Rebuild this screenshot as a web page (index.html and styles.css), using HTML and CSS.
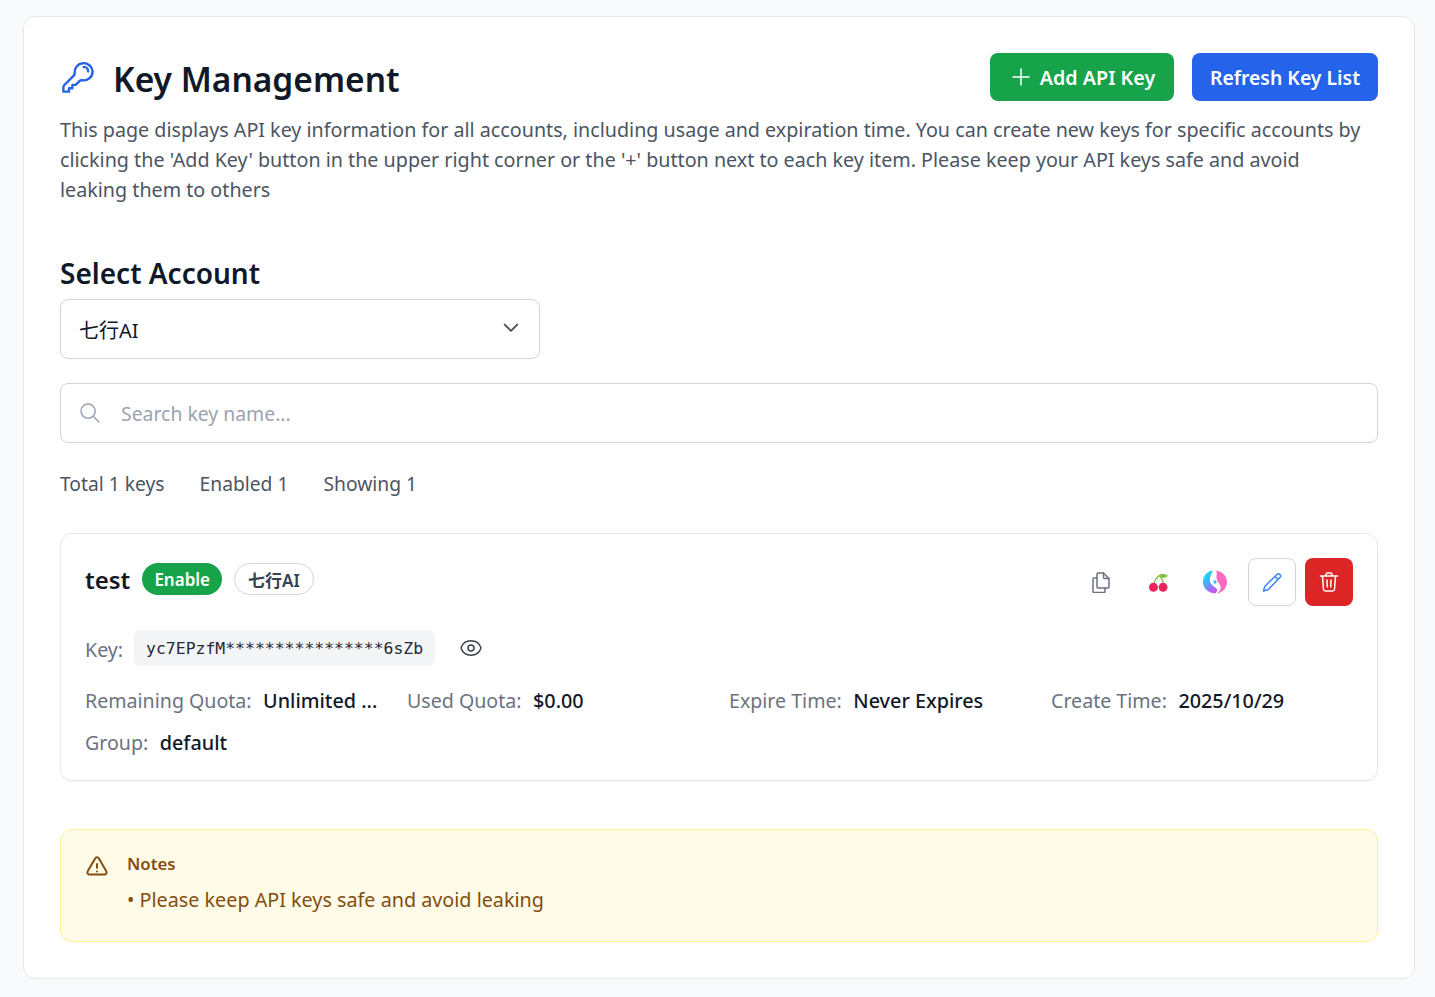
FILE: index.html
```html
<!DOCTYPE html>
<html>
  <head>
    <meta name="viewport" content="width=device-width,initial-scale=1.0">
    <title>Key Management</title>
    <link rel="stylesheet" href="styles.css">
  </head>
  <body>
    <div class="panel">
      <!-- Header -->
      <div class="header">
        <div class="title">
          <svg class="title-icon" viewBox="0 0 24 24" fill="none" stroke="#2563eb" stroke-width="1.6" stroke-linecap="round" stroke-linejoin="round">
            <path d="M15.75 5.25a3 3 0 0 1 3 3m3 0a6 6 0 0 1-7.03 5.91c-.56-.1-1.16.03-1.57.43l-2.65 2.66H8.25v2.25H6v2.25H2.25v-2.82c0-.6.24-1.17.66-1.59l6.41-6.41c.4-.4.53-1 .43-1.57A6 6 0 1 1 21.75 8.25Z"/>
          </svg>
          <h1>Key Management</h1>
        </div>
        <div class="header-btns">
          <button class="btn btn-green">
            <svg class="plus" viewBox="0 0 24 24" fill="none" stroke="currentColor" stroke-width="1.5" stroke-linecap="round"><path d="M12 4v16m8-8H4"/></svg>
            Add API Key
          </button>
          <button class="btn btn-blue">Refresh Key List</button>
        </div>
      </div>
      <p class="desc">This page displays API key information for all accounts, including usage and expiration time. You can create new keys for specific accounts by clicking the 'Add Key' button in the upper right corner or the '+' button next to each key item. Please keep your API keys safe and avoid leaking them to others</p>

      <!-- Account select -->
      <h2 class="section-title">Select Account</h2>
      <div class="select">
        <span>七行AI</span>
        <svg class="chevron" viewBox="0 0 24 24" fill="none" stroke="#4b5563" stroke-width="2.4" stroke-linecap="round" stroke-linejoin="round"><path d="m4.500 8 7.500 7.500L19.500 8"/></svg>
      </div>

      <!-- Search -->
      <div class="search">
        <svg class="search-icon" viewBox="0 0 24 24" fill="none" stroke="#9ca3af" stroke-width="1.5" stroke-linecap="round"><path d="m21 21-5.200-5.200M17.200 10.100a7.100 7.100 0 1 1-14.200 0 7.100 7.100 0 0 1 14.200 0Z"/></svg>
        <span class="placeholder">Search key name...</span>
      </div>

      <div class="stats">
        <span>Total 1 keys</span>
        <span>Enabled 1</span>
        <span>Showing 1</span>
      </div>

      <!-- Key item -->
      <div class="key-card">
        <div class="key-top">
          <div class="key-name">
            <span class="name">test</span>
            <span class="badge badge-green">Enable</span>
            <span class="badge badge-outline">七行AI</span>
          </div>
          <div class="actions">
            <span class="action">
              <svg class="copy-icon" viewBox="0 0 18 21" fill="none" stroke="#6b7280" stroke-width="1.5" stroke-linejoin="round" stroke-linecap="round">
                <path d="M6 1h5.500L17 6.500V15a1 1 0 0 1-1 1H6a1 1 0 0 1-1-1V2a1 1 0 0 1 1-1Z"/>
                <path d="M11.500 1v4.500a1 1 0 0 0 1 1H17"/>
                <path d="M5 6H2a1 1 0 0 0-1 1v12.500a1 1 0 0 0 1 1h10a1 1 0 0 0 1-1V16"/>
              </svg>
            </span>
            <span class="action">
              <svg class="cherry-icon" viewBox="0 0 24 24">
                <path d="M6 15C7 10 9 6 13 3M18 15c0-4-1.500-8-5-12" fill="none" stroke="#7cb342" stroke-width="1.500"/>
                <path d="M12.500 3C15 0 20 0 24 3.500 21 7 15 7.500 12.500 3Z" fill="#8bc34a"/>
                <path d="M12.500 3C10.500 4 8.500 6 7.500 8.500 10 8 12.500 6 12.500 3Z" fill="#8bc34a"/>
                <circle cx="5.600" cy="18" r="5.600" fill="#e6275c"/>
                <circle cx="17.800" cy="18" r="5.600" fill="#e6275c"/>
              </svg>
            </span>
            <span class="action">
              <svg class="orb-icon" viewBox="0 0 24 24">
                <defs>
                  <linearGradient id="orbLeft" x1="0" y1="0" x2="0.5" y2="1">
                    <stop offset="0" stop-color="#1fe5e8"/>
                    <stop offset="0.5" stop-color="#38b6f5"/>
                    <stop offset="1" stop-color="#c05af0"/>
                  </linearGradient>
                </defs>
                <path d="M10 .5C4 1 0 6 0 12c0 6 5 11 12 11.500 2-1.500 3-3.500 1-5.500C9 15 6 13 7 8c.5-3 2-5 3-7.500Z" fill="url(#orbLeft)"/>
                <path d="M13 .5C19 1 24 6 24 12c0 6-5 11-10 11.500 3-2.500 4.500-4.500 3.500-7.500C16 13 13 10 13.500 6c.3-2 .5-3.500-.5-5.500Z" fill="#fb69c0"/>
                <path d="M12 9c.3 1.800 1.200 2.700 3 3-1.800.3-2.700 1.200-3 3-.3-1.800-1.200-2.700-3-3 1.800-.3 2.700-1.200 3-3Z" fill="#38bdf8"/>
              </svg>
            </span>
            <button class="icon-btn icon-btn-edit">
              <svg viewBox="0 0 24 24" fill="none" stroke="#3b82f6" stroke-width="1.500" stroke-linecap="round" stroke-linejoin="round"><path d="M16.900 4.500a2.100 2.100 0 0 1 3 3L8 19.800 3.500 21l1.200-4.500L16.900 4.500ZM15 6.500l3 3"/></svg>
            </button>
            <button class="icon-btn icon-btn-delete">
              <svg viewBox="0 0 24 24" fill="none" stroke="#fff" stroke-width="1.500" stroke-linecap="round" stroke-linejoin="round"><path d="M3.500 6h17M9 6V4.500A1.500 1.500 0 0 1 10.500 3h3A1.500 1.500 0 0 1 15 4.500V6M5.500 6l1 13.500A1.800 1.800 0 0 0 8.300 21h7.400a1.800 1.800 0 0 0 1.800-1.500L18.500 6M10 10l.3 7M14 10l-.3 7"/></svg>
            </button>
          </div>
        </div>

        <div class="key-row">
          <span class="label">Key:</span>
          <code class="key-value">yc7EPzfM****************6sZb</code>
          <svg class="eye-icon" viewBox="0 0 24 24" fill="none" stroke="#374151" stroke-width="1.500" stroke-linecap="round" stroke-linejoin="round">
            <path d="M2.100 12.300a1 1 0 0 1 0-.6C3.500 7.600 7.400 4.800 12 4.800s8.500 2.800 9.900 6.900a1 1 0 0 1 0 .6c-1.400 4.100-5.300 6.900-9.900 6.900s-8.500-2.800-9.900-6.900Z"/>
            <circle cx="12" cy="12" r="3"/>
          </svg>
        </div>

        <div class="meta">
          <div class="meta-item"><span class="label">Remaining Quota:</span><span class="value">Unlimited ...</span></div>
          <div class="meta-item"><span class="label">Used Quota:</span><span class="value">$0.00</span></div>
          <div class="meta-item"><span class="label">Expire Time:</span><span class="value">Never Expires</span></div>
          <div class="meta-item"><span class="label">Create Time:</span><span class="value">2025/10/29</span></div>
          <div class="meta-item"><span class="label">Group:</span><span class="value">default</span></div>
        </div>
      </div>

      <!-- Notes -->
      <div class="notes">
        <svg class="warn-icon" viewBox="0 0 24 24" fill="none" stroke="#854d0e" stroke-width="2" stroke-linecap="round" stroke-linejoin="round">
          <path d="M12 9v3.800m-9.300 3.400c-.9 1.500.2 3.400 1.900 3.400h14.800c1.700 0 2.800-1.900 1.900-3.400L13.900 3.400c-.9-1.500-3-1.500-3.800 0L2.700 16.200ZM12 16.500h0"/>
        </svg>
        <div class="notes-text">
          <div class="notes-title">Notes</div>
          <div class="notes-line">• Please keep API keys safe and avoid leaking</div>
        </div>
      </div>
    </div>
  </body>
</html>
```

FILE: styles.css
```css
* { box-sizing: border-box; }

body {
  margin: 0;
  padding: 16px 20px 18px 23px;
  background: #f9fafb;
  color: #111827;
  font-family: "Noto Sans", "Noto Sans CJK SC", sans-serif;
}

.panel {
  background: #fff;
  border: 1px solid #e5e7eb;
  border-radius: 12px;
  padding: 36px;
  height: 963px;
}

/* Header */
.header {
  display: flex;
  justify-content: space-between;
  align-items: flex-start;
}
.title {
  display: flex;
  align-items: center;
  gap: 17px;
  height: 52px;
}
.title-icon { width: 36px; height: 36px; margin-top: -4px; }
h1 {
  margin: 0;
  font-size: 33.5px;
  font-weight: 600;
  line-height: 52px;
}
.header-btns { display: flex; gap: 18px; }
.btn {
  display: flex;
  align-items: center;
  justify-content: center;
  height: 48px;
  padding: 0;
  border: none;
  border-radius: 8px;
  color: #fff;
  font-family: inherit;
  font-weight: 600;
}
.btn-green { width: 184px; background: #16a34a; gap: 7px; font-size: 19.7px; }
.btn-blue { width: 186px; background: #2563eb; font-size: 19.4px; }
.plus { width: 24px; height: 24px; }

.desc {
  max-width: 1310px;
  margin: 10px 0 0;
  color: #4b5563;
  font-size: 19.72px;
  line-height: 30px;
}

.section-title {
  margin: 48px 0 0;
  font-size: 28px;
  font-weight: 600;
  line-height: 40px;
}

.select {
  display: flex;
  justify-content: space-between;
  align-items: center;
  width: 480px;
  height: 60px;
  margin-top: 6px;
  padding: 0 18px;
  border: 1px solid #d1d5db;
  border-radius: 8px;
  font-size: 20px;
}
.chevron { width: 20px; height: 20px; margin-top: -2px; }

.search {
  display: flex;
  align-items: center;
  height: 60px;
  margin-top: 24px;
  padding: 0 17px;
  border: 1px solid #d1d5db;
  border-radius: 8px;
  font-size: 19.4px;
}
.search-icon { width: 24px; height: 24px; margin-right: 19px; }
.placeholder { color: #9ca3af; }

.stats {
  display: flex;
  gap: 35px;
  margin-top: 26px;
  color: #4b5563;
  font-size: 19.25px;
  line-height: 30px;
}

/* Key item */
.key-card {
  margin-top: 34px;
  height: 248px;
  padding: 24px;
  border: 1px solid #e5e7eb;
  border-radius: 12px;
  box-shadow: 0 1px 2px rgba(0, 0, 0, 0.05);
}
.key-top {
  display: flex;
  justify-content: space-between;
  align-items: center;
  height: 48px;
}
.key-name { display: flex; align-items: center; gap: 12px; margin-top: -4px; }
.name { font-size: 24px; font-weight: 600; line-height: 32px; }
.badge {
  display: flex;
  align-items: center;
  height: 32px;
  margin-top: -2px;
  padding: 0 13px;
  border-radius: 16px;
  font-size: 17px;
  font-weight: 600;
}
.badge-green { background: #16a34a; color: #fff; padding: 0 12px; }
.badge-outline { border: 1px solid #d1d5db; color: #374151; }

.actions { display: flex; align-items: center; gap: 9px; }
.action {
  display: flex;
  align-items: center;
  justify-content: center;
  width: 48px;
  height: 48px;
}
.copy-icon { width: 18px; height: 21px; }
.cherry-icon { width: 19px; height: 19px; }
.orb-icon { width: 24px; height: 24px; }
.icon-btn {
  display: flex;
  align-items: center;
  justify-content: center;
  width: 48px;
  height: 48px;
  padding: 0;
  border-radius: 8px;
}
.icon-btn svg { width: 24px; height: 24px; }
.icon-btn-edit { background: #fff; border: 1px solid #d1d5db; }
.icon-btn-delete { background: #dc2626; border: none; }

.key-row {
  display: flex;
  align-items: center;
  margin-top: 24px;
  height: 36px;
}
.label { color: #6b7280; font-size: 19.6px; white-space: nowrap; }
.key-row .label { margin-top: 2px; }
.key-value {
  margin-left: 11px;
  padding: 0 12px;
  height: 36px;
  line-height: 37px;
  background: #f3f4f6;
  border-radius: 6px;
  color: #1f2937;
  font-family: "DejaVu Sans Mono", monospace;
  font-size: 16.46px;
}
.eye-icon { width: 24px; height: 24px; margin-left: 24px; }

.meta {
  display: flex;
  flex-wrap: wrap;
  column-gap: 30px;
  margin-top: 13px;
}
.meta-item {
  display: flex;
  align-items: center;
  height: 42px;
  gap: 11.500px;
  white-space: nowrap;
}
.meta-item:nth-child(1) { width: 292px; }
.meta-item:nth-child(2) { width: 292px; }
.meta-item:nth-child(3) { width: 292px; }
.meta-item:nth-child(4) { width: 280px; }
.value { font-size: 19.8px; font-weight: 500; color: #111827; }

/* Notes */
.notes {
  display: flex;
  gap: 18px;
  margin-top: 48px;
  height: 113px;
  padding: 23px 24px;
  background: #fefce8;
  border: 1px solid #fef08a;
  border-radius: 12px;
  color: #854d0e;
}
.warn-icon { width: 24px; height: 24px; margin-top: 2px; }
.notes-title { font-size: 16.8px; font-weight: 600; line-height: 22px; }
.notes-line { margin-top: 10px; font-size: 19.75px; line-height: 30px; }
```
